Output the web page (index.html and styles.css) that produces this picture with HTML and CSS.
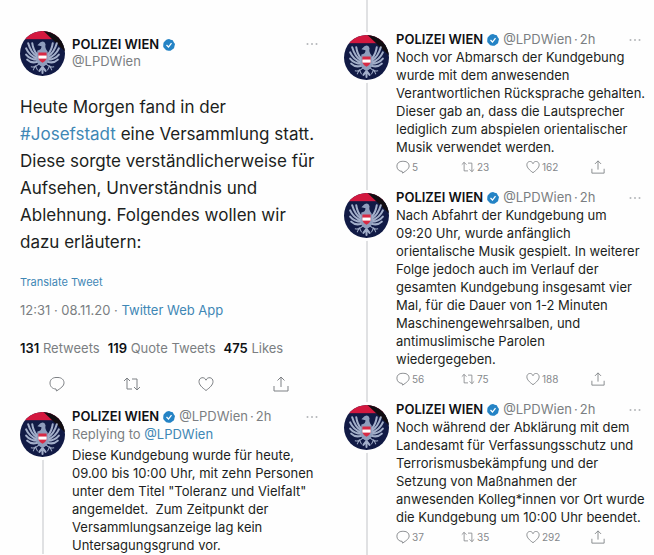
FILE: index.html
```html
<!DOCTYPE html>
<html lang="de">
<head>
    <meta charset="UTF-8">
    <meta name="viewport" content="width=device-width, initial-scale=1.0">
    <title>POLIZEI WIEN</title>
    <link rel="stylesheet" href="styles.css">
</head>
<body>
    <svg class="sprite" aria-hidden="true">
        <symbol id="avatar" viewBox="0 0 44 44">
            <clipPath id="round"><path d="M13 1 Q22 -1 31 1 Q40 5 44 14 V30 Q40 40 31 43 Q22 45 13 43 Q4 39 0 30 V14 Q4 5 13 1Z"/></clipPath>
            <g clip-path="url(#round)">
                <rect width="44" height="44" fill="#111a45"/>
                <rect width="44" height="8" fill="#d3183f"/>
                <path d="M23 0 H33 L44 11 V20Z" fill="#120d12"/>
                <g fill="none" stroke="#a3afca" stroke-linecap="round">
                    <path stroke-width="2" d="M17 25 Q11 22 8 12 M17 27 Q9 24 6 17 M17 28 Q10 28 6 23 M17 30 Q11 32 7 28 M17 23 Q13 19 12 12"/>
                    <path stroke-width="2" d="M27 25 Q33 22 36 12 M27 27 Q35 24 38 17 M27 28 Q34 28 38 23 M27 30 Q33 32 37 28 M27 23 Q31 19 32 12"/>
                    <path stroke-width="1" d="M19 32 Q15 36 11 35 M25 32 Q29 36 33 35 M15 34 L13 38 M15 34 L17 38 M29 34 L27 38 M29 34 L31 38"/>
                    <path stroke-width="2" d="M22 33 V41 M22 35 L19 39 M22 35 L25 39"/>
                </g>
                <path d="M17 19 Q21 19 21 15 L17 14 L20 11 Q24 9 25 13 Q24 17 27 20 L28 29 Q26 34 22 35 Q18 34 16 29Z" fill="#8f9dbc"/>
                <path d="M18 21 H26 V27 Q25 30 22 31 Q19 30 18 27Z" fill="#d82a45"/>
                <rect x="18" y="24" width="8" height="3" fill="#fff"/>
            </g>
        </symbol>
        <symbol id="verified" viewBox="0 0 24 24">
            <path fill="#2483c5" d="M12 0 L15.500 1.500 L19.500 2.500 L21.500 6.500 L24 10 L23 14 L22 18.500 L18.500 21 L15 23.500 L11 23.500 L6.500 22.500 L3.500 19.500 L.5 16 L.5 12 L1 7.500 L4 4 L7.500 1Z"/>
            <path fill="none" stroke="#fff" stroke-width="2.500" d="M7 12 L11 16 L17 8"/>
        </symbol>
        <symbol id="reply" viewBox="0 0 16 16">
            <path d="M7 13 C3.500 13 1 10.500 1 7 C1 3.700 3.700 1.500 7 1.500 H9 C12.500 1.500 15 3.700 15 6.800 C15 10 12 12 7.500 15Z"/>
        </symbol>
        <symbol id="retweet" viewBox="0 0 18 16">
            <path d="M1 5 L4 2 L7 5 M4 2 V13 H9 M17 11 L14 14 L11 11 M14 14 V3 H9"/>
        </symbol>
        <symbol id="like" viewBox="0 0 16 16">
            <path d="M8 14.500 C4 11.500 1 8.800 1 5.500 C1 1.200 6.500 .2 8 4.200 C9.500 .2 15 1.200 15 5.500 C15 8.800 12 11.500 8 14.500Z"/>
        </symbol>
        <symbol id="share" viewBox="0 0 16 16">
            <path d="M1 10 V15 H15 V10 M8 11 V1 M4.500 4.500 L8 1 L11.500 4.500"/>
        </symbol>
        <symbol id="more" viewBox="0 0 12 4">
            <circle cx="1.500" cy="2" r="1"/><circle cx="6" cy="2" r="1"/><circle cx="10.500" cy="2" r="1"/>
        </symbol>
    </svg>

    <main class="page">
        <section class="column main-column">
            <article class="main-tweet">
                <header class="main-header">
                    <svg class="avatar"><use href="#avatar"/></svg>
                    <div class="names">
                        <div class="head"><span class="name">POLIZEI WIEN</span><svg class="verified"><use href="#verified"/></svg></div>
                        <div class="handle">@LPDWien</div>
                    </div>
                    <button class="more" aria-label="More"><svg><use href="#more"/></svg></button>
                </header>
                <p class="main-text">Heute Morgen fand in der<br><a href="#">#Josefstadt</a> eine Versammlung statt.<br>Diese sorgte verständlicherweise für<br>Aufsehen, Unverständnis und<br>Ablehnung. Folgendes wollen wir<br>dazu erläutern:</p>
                <a class="translate" href="#">Translate Tweet</a>
                <div class="date">12:31 · 08.11.20 · <a href="#">Twitter Web App</a></div>
                <div class="counts">
                    <span><b>131</b> Retweets</span>
                    <span><b>119</b> Quote Tweets</span>
                    <span><b>475</b> Likes</span>
                </div>
                <div class="main-actions">
                    <button aria-label="Reply"><svg><use href="#reply"/></svg></button>
                    <button aria-label="Retweet"><svg class="wide"><use href="#retweet"/></svg></button>
                    <button aria-label="Like"><svg><use href="#like"/></svg></button>
                    <button aria-label="Share"><svg><use href="#share"/></svg></button>
                </div>
            </article>

            <article class="tweet reply">
                <svg class="avatar"><use href="#avatar"/></svg>
                <div class="body">
                    <header class="head">
                        <span class="name">POLIZEI WIEN</span><svg class="verified"><use href="#verified"/></svg>
                        <span class="handle">@LPDWien<span class="dot">·</span>2h</span>
                        <button class="more" aria-label="More"><svg><use href="#more"/></svg></button>
                    </header>
                    <div class="replying">Replying to <a href="#">@LPDWien</a></div>
                    <p class="text">Diese Kundgebung wurde für heute,<br>09.00 bis 10:00 Uhr, mit zehn Personen<br>unter dem Titel "Toleranz und Vielfalt"<br>angemeldet.&nbsp; Zum Zeitpunkt der<br>Versammlungsanzeige lag kein<br>Untersagungsgrund vor.</p>
                </div>
            </article>
        </section>

        <section class="column thread">
            <article class="tweet">
                <svg class="avatar"><use href="#avatar"/></svg>
                <div class="body">
                    <header class="head">
                        <span class="name">POLIZEI WIEN</span><svg class="verified"><use href="#verified"/></svg>
                        <span class="handle">@LPDWien<span class="dot">·</span>2h</span>
                        <button class="more" aria-label="More"><svg><use href="#more"/></svg></button>
                    </header>
                    <p class="text">Noch vor Abmarsch der Kundgebung<br>wurde mit dem anwesenden<br>Verantwortlichen Rücksprache gehalten.<br>Dieser gab an, dass die Lautsprecher<br>lediglich zum abspielen orientalischer<br>Musik verwendet werden.</p>
                    <div class="actions">
                        <button aria-label="Reply"><svg><use href="#reply"/></svg>5</button>
                        <button aria-label="Retweet"><svg><use href="#retweet"/></svg>23</button>
                        <button aria-label="Like"><svg><use href="#like"/></svg>162</button>
                        <button aria-label="Share"><svg><use href="#share"/></svg></button>
                    </div>
                </div>
            </article>

            <article class="tweet">
                <svg class="avatar"><use href="#avatar"/></svg>
                <div class="body">
                    <header class="head">
                        <span class="name">POLIZEI WIEN</span><svg class="verified"><use href="#verified"/></svg>
                        <span class="handle">@LPDWien<span class="dot">·</span>2h</span>
                        <button class="more" aria-label="More"><svg><use href="#more"/></svg></button>
                    </header>
                    <p class="text">Nach Abfahrt der Kundgebung um<br>09:20 Uhr, wurde anfänglich<br>orientalische Musik gespielt. In weiterer<br>Folge jedoch auch im Verlauf der<br>gesamten Kundgebung insgesamt vier<br>Mal, für die Dauer von 1-2 Minuten<br>Maschinengewehrsalben, und<br>antimuslimische Parolen<br>wiedergegeben.</p>
                    <div class="actions">
                        <button aria-label="Reply"><svg><use href="#reply"/></svg>56</button>
                        <button aria-label="Retweet"><svg><use href="#retweet"/></svg>75</button>
                        <button aria-label="Like"><svg><use href="#like"/></svg>188</button>
                        <button aria-label="Share"><svg><use href="#share"/></svg></button>
                    </div>
                </div>
            </article>

            <article class="tweet">
                <svg class="avatar"><use href="#avatar"/></svg>
                <div class="body">
                    <header class="head">
                        <span class="name">POLIZEI WIEN</span><svg class="verified"><use href="#verified"/></svg>
                        <span class="handle">@LPDWien<span class="dot">·</span>2h</span>
                        <button class="more" aria-label="More"><svg><use href="#more"/></svg></button>
                    </header>
                    <p class="text">Noch während der Abklärung mit dem<br>Landesamt für Verfassungsschutz und<br>Terrorismusbekämpfung und der<br>Setzung von Maßnahmen der<br>anwesenden Kolleg*innen vor Ort wurde<br>die Kundgebung um 10:00 Uhr beendet.</p>
                    <div class="actions">
                        <button aria-label="Reply"><svg><use href="#reply"/></svg>37</button>
                        <button aria-label="Retweet"><svg><use href="#retweet"/></svg>35</button>
                        <button aria-label="Like"><svg><use href="#like"/></svg>292</button>
                        <button aria-label="Share"><svg><use href="#share"/></svg></button>
                    </div>
                </div>
            </article>
        </section>
    </main>
</body>
</html>
```
FILE: styles.css
```css
* {
    box-sizing: border-box;
}

body {
    margin: 0;
    background-color: #fefefe;
    color: #1c1e21;
    font-family: Inter, "Liberation Sans", sans-serif;
    font-size: 13px;
    line-height: 17px;
}

a {
    color: #3f87b5;
    text-decoration: none;
}

p {
    margin: 0;
}

button {
    display: flex;
    align-items: center;
    padding: 0;
    border: none;
    background: none;
    color: #85888c;
    font-family: inherit;
    font-size: 10px;
    line-height: 14px;
    cursor: pointer;
}

svg {
    display: block;
    flex: none;
}

.sprite {
    position: absolute;
    width: 0;
    height: 0;
}

.page {
    display: grid;
    grid-template-columns: repeat(2, minmax(0, 1fr));
    min-height: 100vh;
}

.main-column {
    padding: 31px 9px 0 20px;
}

.thread {
    padding: 31px 13px 0 17px;
    background: linear-gradient(#e0e1e3, #e0e1e3) 39px 0 / 2px 100% no-repeat;
}

.avatar {
    width: 45px;
    height: 45px;
    border-radius: 50%;
    background-color: #fefefe;
    box-shadow: 0 0 0 3px #fefefe;
}

.head {
    display: flex;
    align-items: center;
    height: 17px;
    white-space: nowrap;
}

.name {
    color: #0f1114;
    font-weight: 600;
}

.verified {
    width: 12px;
    height: 12px;
    margin: 0 4px;
}

.handle,
.replying {
    color: #7b7e82;
}

.dot {
    margin: 0 2px;
}

.more {
    margin-left: auto;
}

.more svg {
    width: 12px;
    height: 4px;
    fill: #b4b7ba;
}

.main-header {
    display: flex;
    gap: 7px;
}

.names {
    padding-top: 5px;
}

.main-header .more {
    align-self: flex-start;
    margin-top: 11px;
}

.main-text {
    margin-top: 18px;
    font-size: 17px;
    line-height: 27px;
    white-space: nowrap;
}

.translate {
    display: block;
    margin-top: 18px;
    font-size: 11px;
}

.date {
    margin-top: 11px;
    color: #7b7e82;
}

.counts {
    display: flex;
    gap: 8px;
    margin-top: 21px;
    color: #7b7e82;
    font-size: 13px;
    white-space: nowrap;
}

.counts b {
    color: #0f1114;
    font-weight: 600;
}

.main-actions {
    display: grid;
    grid-template-columns: repeat(4, 1fr);
    margin-top: 19px;
}

.main-actions button {
    justify-content: center;
}

.main-actions svg,
.actions svg {
    fill: none;
    stroke: #7d8084;
    stroke-width: 1px;
}

.main-actions svg {
    width: 16px;
    height: 16px;
}

.main-actions .wide {
    width: 18px;
}

.tweet {
    display: flex;
    gap: 7px;
    margin-bottom: 15px;
}

.tweet .avatar {
    margin-top: 4px;
}

.reply {
    margin: 16px 0 0;
    background: linear-gradient(#e0e1e3, #e0e1e3) 22px 8px / 2px 100% no-repeat;
}

.body {
    flex: 1;
    min-width: 0;
}

.replying {
    margin: 1px 0 3px;
}

.text {
    line-height: 18px;
    white-space: nowrap;
}

.actions {
    display: grid;
    grid-template-columns: repeat(3, 1fr) 50px;
    margin-top: 4px;
}

.actions button {
    gap: 2px;
}

.actions svg {
    width: 14px;
    height: 14px;
}
```
